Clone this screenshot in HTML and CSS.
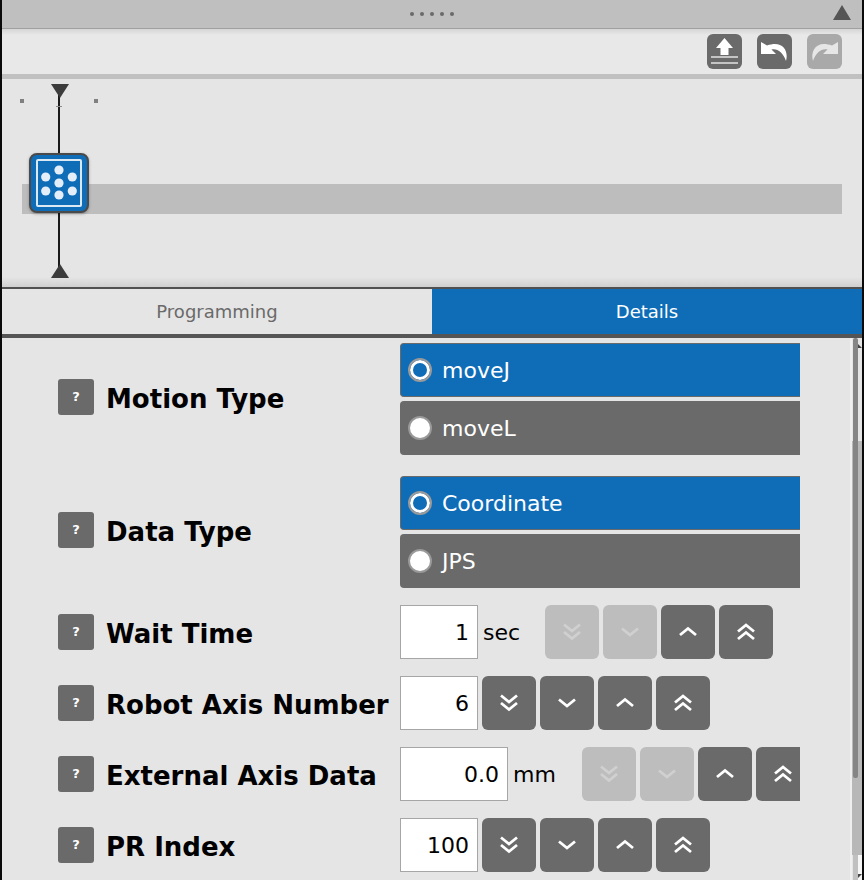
FILE: index.html
```html
<!DOCTYPE html>
<html lang="en">
<head>
<meta charset="utf-8">
<title>Details</title>
<link rel="stylesheet" href="styles.css">
</head>
<body>
<div class="app">
  <header class="grip">
    <div class="dots"><i></i><i></i><i></i><i></i><i></i></div>
    <svg class="collapse" width="18" height="15" viewBox="0 0 18 15"><path d="M9 0 18 15H0z" fill="#555"/></svg>
  </header>
  <div class="toolbar">
    <button class="tool"><svg width="35" height="35" viewBox="0 0 35 35"><path d="M17.500 4 26 14h-4.500v7h-8v-7H9z" fill="#fff"/><path d="M4 23h27M4 29h27" stroke="#c4c4c4" stroke-width="2"/></svg></button>
    <button class="tool"><svg width="35" height="35" viewBox="0 0 35 35"><path d="M4 8V20H19L14.500 15.500C20 14 26 18 29 27 32 16 25 6 10 11.500z" fill="#fff"/></svg></button>
    <button class="tool off"><svg width="35" height="35" viewBox="0 0 35 35"><path d="M31 8V20H16L20.500 15.500C15 14 9 18 6 27 3 16 10 6 25 11.500z" fill="#e6e6e6"/></svg></button>
  </div>
  <section class="canvas">
    <div class="ticks"><i></i><i></i></div>
    <div class="track"></div>
    <div class="flowline"></div>
    <svg class="tri top" width="18" height="14" viewBox="0 0 18 14"><path d="M0 0H18L9 14z" fill="#3c3c3c"/></svg>
    <svg class="tri bottom" width="18" height="14" viewBox="0 0 18 14"><path d="M9 0 18 14H0z" fill="#3c3c3c"/></svg>
    <div class="node">
      <svg width="46" height="48" viewBox="0 0 46 48">
        <rect x="1" y="1" width="44" height="46" rx="1" fill="none" stroke="#dbe9f5" stroke-width="2"/>
        <g fill="#e3eef8"><circle cx="23" cy="11" r="4.600"/><circle cx="9.700" cy="18" r="4.600"/><circle cx="36.300" cy="18" r="4.600"/><circle cx="23" cy="24" r="4.600"/><circle cx="9.700" cy="32" r="4.600"/><circle cx="36.300" cy="32" r="4.600"/><circle cx="23" cy="36" r="4.600"/></g>
      </svg>
    </div>
  </section>
  <nav class="tabs">
    <div class="tab">Programming</div>
    <div class="tab active">Details</div>
  </nav>
  <main class="panel">
    <div class="rows">
      <div class="row group first">
        <div class="label"><span class="help">?</span><span class="name">Motion Type</span></div>
        <div class="field stack">
          <div class="radio on"><span class="dot"></span>moveJ</div>
          <div class="radio"><span class="dot"></span>moveL</div>
        </div>
      </div>
      <div class="row group">
        <div class="label"><span class="help">?</span><span class="name">Data Type</span></div>
        <div class="field stack">
          <div class="radio on"><span class="dot"></span>Coordinate</div>
          <div class="radio"><span class="dot"></span>JPS</div>
        </div>
      </div>
      <div class="row">
        <div class="label"><span class="help">?</span><span class="name">Wait Time</span></div>
        <div class="field">
          <input class="num" value="1"><span class="unit">sec</span>
          <button class="step off"><svg viewBox="0 0 20 20"><use href="#dd"/></svg></button>
          <button class="step off"><svg viewBox="0 0 20 20"><use href="#d"/></svg></button>
          <button class="step"><svg viewBox="0 0 20 20"><use href="#u"/></svg></button>
          <button class="step"><svg viewBox="0 0 20 20"><use href="#uu"/></svg></button>
        </div>
      </div>
      <div class="row">
        <div class="label"><span class="help">?</span><span class="name">Robot Axis Number</span></div>
        <div class="field">
          <input class="num" value="6">
          <button class="step"><svg viewBox="0 0 20 20"><use href="#dd"/></svg></button>
          <button class="step"><svg viewBox="0 0 20 20"><use href="#d"/></svg></button>
          <button class="step"><svg viewBox="0 0 20 20"><use href="#u"/></svg></button>
          <button class="step"><svg viewBox="0 0 20 20"><use href="#uu"/></svg></button>
        </div>
      </div>
      <div class="row">
        <div class="label"><span class="help">?</span><span class="name">External Axis Data</span></div>
        <div class="field">
          <input class="num wide" value="0.0"><span class="unit mm">mm</span>
          <button class="step off"><svg viewBox="0 0 20 20"><use href="#dd"/></svg></button>
          <button class="step off"><svg viewBox="0 0 20 20"><use href="#d"/></svg></button>
          <button class="step"><svg viewBox="0 0 20 20"><use href="#u"/></svg></button>
          <button class="step"><svg viewBox="0 0 20 20"><use href="#uu"/></svg></button>
        </div>
      </div>
      <div class="row">
        <div class="label"><span class="help">?</span><span class="name">PR Index</span></div>
        <div class="field">
          <input class="num" value="100">
          <button class="step"><svg viewBox="0 0 20 20"><use href="#dd"/></svg></button>
          <button class="step"><svg viewBox="0 0 20 20"><use href="#d"/></svg></button>
          <button class="step"><svg viewBox="0 0 20 20"><use href="#u"/></svg></button>
          <button class="step"><svg viewBox="0 0 20 20"><use href="#uu"/></svg></button>
        </div>
      </div>
    </div>
    <div class="scroll">
      <div class="scroll-track"></div>
      <div class="scroll-thumb"></div>
      <div class="scroll-end"></div>
      <i class="scroll-arrow up"></i>
      <i class="scroll-arrow down"></i>
    </div>
  </main>
</div>
<svg class="defs" width="0" height="0">
  <defs>
    <g id="d" fill="none" stroke="currentColor" stroke-width="2.800"><path d="M2 6.500l8 6.500 8-6.500"/></g>
    <g id="u" fill="none" stroke="currentColor" stroke-width="2.800"><path d="M2 13l8-6.500 8 6.500"/></g>
    <g id="dd" fill="none" stroke="currentColor" stroke-width="2.800"><path d="M2 2.500l8 6.500 8-6.500M2 10l8 6.500 8-6.500"/></g>
    <g id="uu" fill="none" stroke="currentColor" stroke-width="2.800"><path d="M2 9.500l8-6.500 8 6.500M2 17l8-6.500 8 6.500"/></g>
  </defs>
</svg>
</body>
</html>
```
FILE: styles.css
```css
* { box-sizing: border-box; }
html, body { margin: 0; padding: 0; height: 100%; overflow: hidden; }
body { background: #e5e5e5; font-family: "DejaVu Sans", sans-serif; color: #000; }
.app { width: 864px; height: 880px; border-left: 2px solid #0a0a0a; border-right: 2px solid #0a0a0a; display: flex; flex-direction: column; overflow: hidden; }
.grip { flex: 0 0 29px; background: #bfbfbf; border-bottom: 1px solid #a0a0a0; display: flex; align-items: center; justify-content: center; position: relative; }
.dots { display: flex; gap: 6px; }
.dots i { width: 4px; height: 4px; background: #6a6a6a; border-radius: 50%; }
.collapse { position: absolute; right: 11px; top: 5px; }
.toolbar { flex: 0 0 50px; background: linear-gradient(#d5d5d5, #e8e8e8 6px); border-bottom: 5px solid #c0c0c0; display: flex; justify-content: flex-end; gap: 15px; padding: 5px 20px 0 0; }
.tool { width: 35px; height: 35px; padding: 0; border: 0; border-radius: 6px; background: #6a6a6a; }
.tool.off { background: #a9a9a9; }
.tool svg { display: block; }
.canvas { flex: 0 0 210px; position: relative; background: linear-gradient(#e5e5e5 198px, #cfcfcf); border-bottom: 2px solid #505050; }
.ticks { position: absolute; left: 18px; top: 20px; width: 78px; display: flex; justify-content: space-between; }
.ticks i { width: 4px; height: 4px; background: #808080; }
.track { position: absolute; left: 20px; top: 105px; width: 820px; height: 30px; background: #bdbdbd; }
.flowline { position: absolute; left: 56px; top: 14px; width: 2px; height: 175px; background: #1a1a1a; }
.flowline::before { content: ""; position: absolute; left: -2px; top: 13px; width: 6px; height: 1px; background: #8c8c8c; }
.tri { position: absolute; left: 49px; }
.tri.top { top: 5px; }
.tri.bottom { top: 185px; }
.node { position: absolute; left: 27px; top: 74px; width: 60px; height: 60px; border-radius: 8px; border: 2px solid #4a4a4a; background: #0f6db8; display: flex; align-items: center; justify-content: center; box-shadow: 0 1px 3px rgba(0,0,0,.3); }
.node svg { display: block; }
.tabs { flex: 0 0 49px; display: flex; border-bottom: 4px solid #555; background: #e5e5e5; font-size: 18px; }
.tab { flex: 0 0 430px; display: flex; align-items: center; justify-content: center; color: #6a6a6a; }
.tab.active { flex: 1; background: #0f6db8; color: #fff; }
.panel { flex: 1; display: flex; min-height: 0; position: relative; }
.rows { flex: 1; padding-top: 5px; overflow: hidden; }
.row { display: flex; align-items: center; margin-bottom: 17px; }
.row.first { margin-bottom: 21px; }
.group .label { margin-bottom: 4px; }
.label { flex: 0 0 398px; display: flex; align-items: center; padding-left: 56px; }
.help { flex: 0 0 36px; height: 36px; margin-right: 13px; background: #6a6a6a; border-radius: 3px; color: #fff; font-size: 13px; font-weight: 700; display: flex; align-items: center; justify-content: center; padding-bottom: 1px; }
.name { font-size: 26px; font-weight: 700; white-space: nowrap; margin: 4px 0 0 -1px; }
.field { flex: 0 0 400px; width: 400px; display: flex; align-items: center; gap: 4px; overflow: hidden; }
.field.stack { flex-direction: column; align-items: stretch; }
.radio { height: 54px; background: #6a6a6a; color: #fff; border-radius: 4px 0 0 4px; display: flex; align-items: center; padding-left: 8px; font-size: 22px; }
.radio.on { background: #0f6db8; border: 1px solid #6a6a6a; border-right: 0; padding-left: 7px; }
.dot { width: 24px; height: 24px; margin-right: 10px; border-radius: 50%; background: #fff; border: 2px solid #9a9a9a; }
.radio.on .dot { background: #0f6db8; box-shadow: inset 0 0 0 3px #fff; }
.num { width: 78px; height: 54px; flex: none; padding: 0 8px 0 0; border: 1px solid #a6a6a6; background: #fff; text-align: right; font: 22px "DejaVu Sans", sans-serif; color: #000; }
.num.wide { width: 108px; }
.unit { flex: 0 0 59px; font-size: 22px; padding-left: 1px; }
.unit.mm { flex-basis: 66px; }
.step { flex: none; width: 54px; height: 54px; padding: 17px; border: 0; border-radius: 6px; background: #6a6a6a; color: #fff; }
.step.off { background: #bdbdbd; color: #d0d0d0; }
.step svg { display: block; width: 20px; height: 20px; }
.scroll { position: absolute; top: 0; right: 0; bottom: 0; width: 12px; background: linear-gradient(to right, #efefef 2px, transparent 2px); }
.scroll-track { position: absolute; left: 2px; top: 103px; width: 10px; height: 414px; background: #b8b8b8; }
.scroll-thumb { position: absolute; left: 3px; top: 0; width: 5px; height: 440px; background: #858585; border-radius: 2px; }
.scroll-end { position: absolute; left: 3px; right: 0; top: 517px; bottom: 0; background: linear-gradient(to right, #c0c0c0 5px, #f6f6f6 5px); }
.scroll-arrow { position: absolute; left: 8px; width: 4px; height: 4px; background: #444; }
.scroll-arrow.up { top: 6px; clip-path: polygon(0 0, 100% 100%, 0 100%); }
.scroll-arrow.down { top: 536px; clip-path: polygon(0 0, 100% 0, 0 100%); }
.defs { position: absolute; }
```
